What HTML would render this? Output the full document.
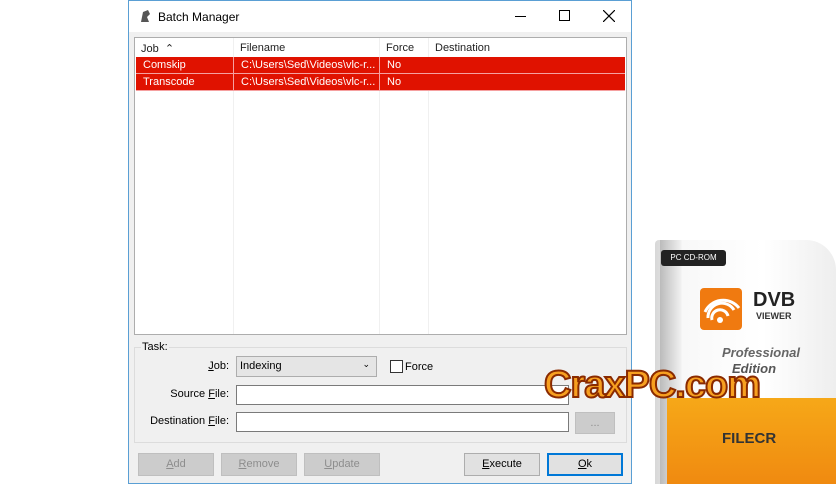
<!DOCTYPE html>
<html><head><style>
*{margin:0;padding:0;box-sizing:border-box}
body{width:836px;height:484px;background:#fff;position:relative;overflow:hidden;font-family:"Liberation Sans",sans-serif;font-size:11px;color:#000}
.a{position:absolute}
.win{left:128px;top:0;width:504px;height:484px;background:#f0f0f0;border:1px solid #5a9fd4}
.tb{left:0;top:0;width:502px;height:31px;background:#fff}
.list{left:5px;top:36px;width:493px;height:298px;background:#fff;border:1px solid #adadad}
.hd{top:0;height:19px;font-size:11px;color:#222;padding:4px 0 0 6px}
.vl{top:0;width:1px;height:296px;background:#f0f0f0}
.row{left:1px;width:489px;height:17px;background:#e01200;color:#fff;border-bottom:1px solid #f5a0a0}
.row span{position:absolute;top:2px}
.btn{height:23px;background:#e1e1e1;border:1px solid #adadad;text-align:center;line-height:21px;font-size:11px}
.dis{background:#cccccc;border-color:#bfbfbf;color:#8d8d8d}
.inp{background:#fff;border:1px solid #7a7a7a;height:20px}
.lbl{text-align:right;font-size:11px}
</style></head><body>
<div class="a win">
 <div class="a tb">
  <svg class="a" style="left:9px;top:7px" width="14" height="16"><path d="M3 14 L5 4 L10 2 L12 6 L9 9 L11 14 Z" fill="#555"/></svg>
  <div class="a" style="left:29px;top:9px;font-size:12px">Batch Manager</div>
  <div class="a" style="left:386px;top:15px;width:11px;height:1px;background:#000"></div>
  <div class="a" style="left:430px;top:9px;width:11px;height:11px;border:1px solid #000"></div>
  <svg class="a" style="left:474px;top:9px" width="12" height="12"><path d="M0 0L12 12M12 0L0 12" stroke="#000" stroke-width="1.2"/></svg>
 </div>
 <div class="a list">
  <div class="a hd" style="left:0;width:99px">Job &nbsp;⌃</div>
  <div class="a hd" style="left:99px;width:146px">Filename</div>
  <div class="a hd" style="left:245px;width:49px">Force</div>
  <div class="a hd" style="left:294px;width:195px">Destination</div>
  <div class="a vl" style="left:98px"></div><div class="a vl" style="left:244px"></div><div class="a vl" style="left:293px"></div>
  <div class="a row" style="top:19px"><span style="left:7px">Comskip</span><span style="left:105px">C:\Users\Sed\Videos\vlc-r...</span><span style="left:251px">No</span></div>
  <div class="a row" style="top:36px"><span style="left:7px">Transcode</span><span style="left:105px">C:\Users\Sed\Videos\vlc-r...</span><span style="left:251px">No</span></div>
  <div class="a" style="left:98px;top:19px;width:1px;height:34px;background:#f5a0a0"></div>
  <div class="a" style="left:244px;top:19px;width:1px;height:34px;background:#f5a0a0"></div>
 </div>
 <div class="a" style="left:5px;top:346px;width:493px;height:96px;border:1px solid #dcdcdc"></div>
 <div class="a" style="left:12px;top:340px;background:#f0f0f0;padding:0 1px">Task:</div>
 <div class="a lbl" style="left:40px;top:359px;width:60px"><u>J</u>ob:</div>
 <div class="a" style="left:107px;top:355px;width:141px;height:21px;background:#e5e5e5;border:1px solid #adadad;padding:3px 3px">Indexing<span class="a" style="right:6px;top:2px;font-size:9px">&#8964;</span></div>
 <div class="a" style="left:261px;top:359px;width:13px;height:13px;border:1px solid #333;background:#fff"></div>
 <div class="a" style="left:276px;top:360px">Force</div>
 <div class="a lbl" style="left:0;top:387px;width:100px">Source <u>F</u>ile:</div>
 <div class="a inp" style="left:107px;top:384px;width:333px"></div>
 <div class="a lbl" style="left:0;top:414px;width:100px">Destination <u>F</u>ile:</div>
 <div class="a inp" style="left:107px;top:411px;width:333px"></div>
 <div class="a btn dis" style="left:446px;top:411px;width:40px;height:22px;line-height:20px">...</div>
 <div class="a btn dis" style="left:9px;top:452px;width:76px"><u>A</u>dd</div>
 <div class="a btn dis" style="left:92px;top:452px;width:76px"><u>R</u>emove</div>
 <div class="a btn dis" style="left:175px;top:452px;width:76px"><u>U</u>pdate</div>
 <div class="a btn" style="left:335px;top:452px;width:76px"><u>E</u>xecute</div>
 <div class="a btn" style="left:418px;top:452px;width:76px;border:2px solid #0078d7;line-height:19px"><u>O</u>k</div>
</div>
<div class="a" style="left:655px;top:240px;width:181px;height:244px;background:linear-gradient(90deg,#d8d8d8 0,#eee 14%,#f8f8f8 15%,#fff 60%,#eee 100%);border-radius:4px 30px 0 0"></div>
<div class="a" style="left:660px;top:240px;width:20px;height:244px;background:linear-gradient(90deg,#bbb,#eee)"></div>
<div class="a" style="left:661px;top:250px;width:65px;height:16px;background:#222;border-radius:3px;color:#fff;font-size:8px;text-align:center;line-height:16px">PC CD-ROM</div>
<div class="a" style="left:700px;top:288px;width:42px;height:42px;background:#f07a10;border-radius:4px"></div>
<svg class="a" style="left:700px;top:288px" width="42" height="42"><g fill="none" stroke="#fff" stroke-width="3"><path d="M12 32a8 8 0 0 1 16-4"/><path d="M8 30a14 14 0 0 1 26-8"/><path d="M5 24a20 20 0 0 1 34-4"/></g><circle cx="20" cy="32" r="3" fill="#fff"/></svg>
<div class="a" style="left:753px;top:289px;font-size:20px;font-weight:bold;color:#222">DVB</div>
<div class="a" style="left:756px;top:311px;font-size:9px;font-weight:bold;color:#333">VIEWER</div>
<div class="a" style="left:722px;top:345px;font-size:13px;font-weight:bold;font-style:italic;color:#666">Professional</div>
<div class="a" style="left:732px;top:361px;font-size:13px;font-weight:bold;font-style:italic;color:#555">Edition</div>
<div class="a" style="left:667px;top:398px;width:169px;height:86px;background:linear-gradient(180deg,#f6a818,#f08a10)"></div>
<div class="a" style="left:722px;top:430px;font-size:15px;font-weight:bold;color:#333">FILECR</div>
<div class="a" style="left:544px;top:364px;font-size:38px;font-weight:bold;color:#f7a020;-webkit-text-stroke:2px #8a2a00;letter-spacing:-1px">CraxPC.com</div>
</body></html>
